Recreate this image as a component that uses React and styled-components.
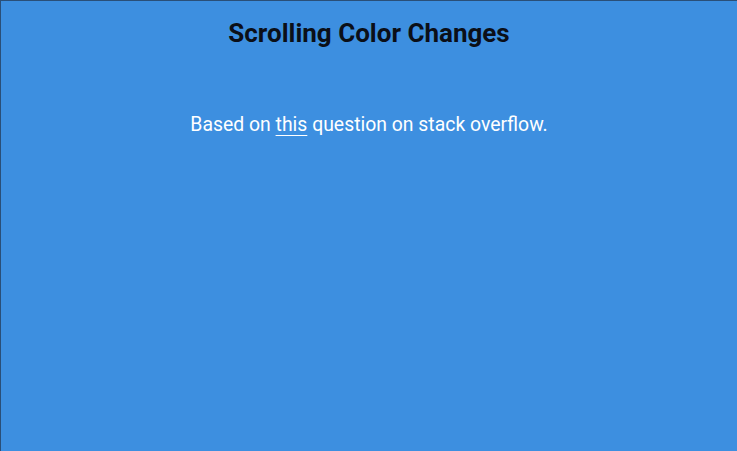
import styled, { createGlobalStyle } from 'styled-components';

const Global = createGlobalStyle`
  html, body {
    margin: 0;
    padding: 0;
    height: 100%;
  }
  body {
    background: #3d8fe0;
    font-family: Roboto, "Liberation Sans", sans-serif;
  }
`;

// Página inteira com a cor de fundo
const Page = styled.main`
  box-sizing: border-box;
  min-height: 451px;
  background: #3d8fe0;
  border-top: 1px solid #2a4f78;
  border-left: 1px solid #2a4f78;
  text-align: center;
  padding-top: 16px;
`;

const Title = styled.h1`
  margin: 0;
  font-size: 26px;
  font-weight: 700;
  color: #0b0f18;
  line-height: 32px;
`;

const Text = styled.p`
  margin: 63px 0 0;
  font-size: 19.4px;
  color: #ffffff;
  line-height: 26px;
`;

const Link = styled.a`
  color: inherit;
  text-decoration: underline;
  text-underline-offset: 4px;
`;

export default function App() {
  return (
    <>
      <Global />
      <Page>
        <Title>Scrolling Color Changes</Title>
        <Text>
          Based on <Link href="#">this</Link> question on stack overflow.
        </Text>
      </Page>
    </>
  );
}
